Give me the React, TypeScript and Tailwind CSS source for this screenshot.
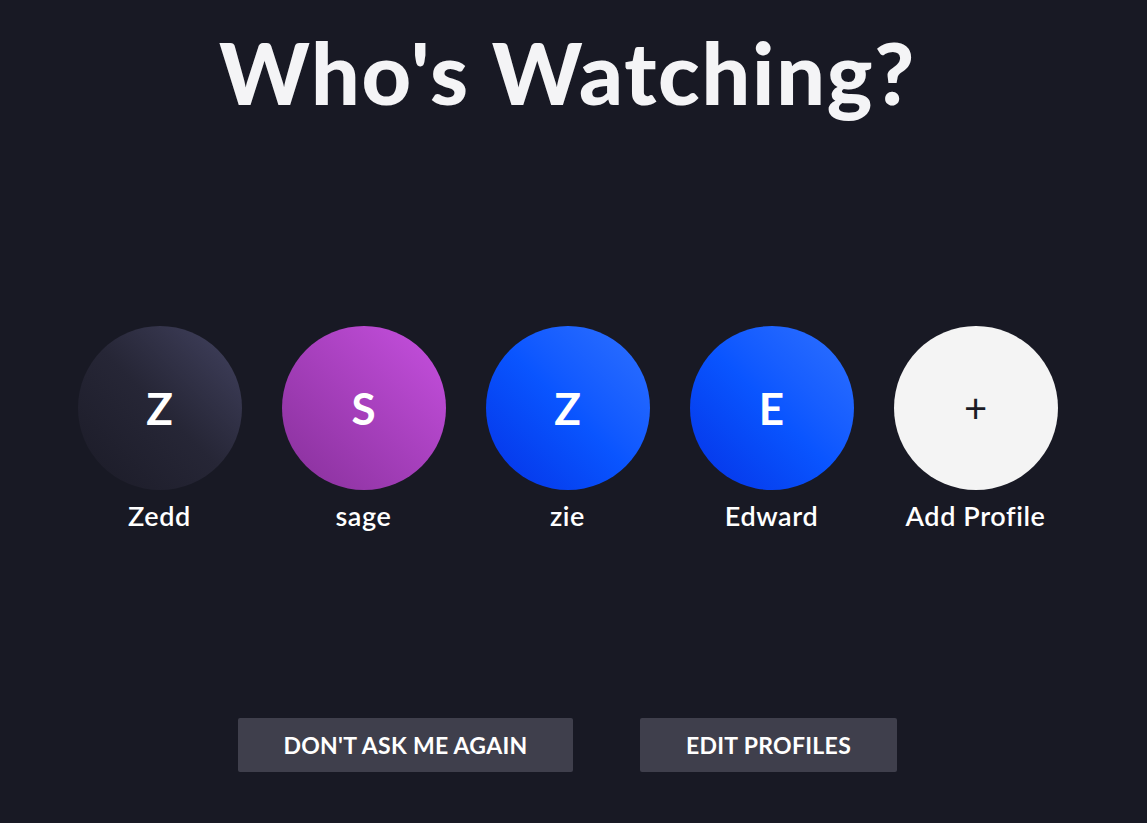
const profiles = [
  { name: "Zedd", initial: "Z", bg: "bg-gradient-to-bl from-[#434361] via-[#262636] to-[#1b1b27]" },
  { name: "sage", initial: "S", bg: "bg-gradient-to-bl from-[#c750e0] to-[#87309a]" },
  { name: "zie", initial: "Z", bg: "bg-gradient-to-bl from-[#2e70ff] via-[#0a55ff] to-[#0830e6]" },
  { name: "Edward", initial: "E", bg: "bg-gradient-to-bl from-[#2e70ff] via-[#0a55ff] to-[#0830e6]" },
];

function Profile({ name, initial, bg }: { name: string; initial: string; bg: string }) {
  return (
    <button type="button" className="flex w-[164px] flex-col items-center">
      <div className={`flex h-[164px] w-[164px] items-center justify-center rounded-full ${bg}`}>
        <span className="text-[44px] font-bold text-white">{initial}</span>
      </div>
      <span className="mt-[10px] whitespace-nowrap text-[27px] font-semibold leading-[32px] tracking-[0.6px] text-white">
        {name}
      </span>
    </button>
  );
}

export default function App() {
  return (
    <div
      className="h-[823px] w-full overflow-hidden bg-[#181924]"
      style={{ fontFamily: "Lato, 'Open Sans', sans-serif" }}
    >
      <div className="flex w-[1135px] flex-col items-center">
        <h1 className="mt-[26px] text-[86px] font-black leading-[92px] tracking-[1.8px] text-[#f4f4f6]">
          Who's Watching?
        </h1>

        <div className="mt-[208px] flex gap-[40px]">
          {profiles.map((p) => (
            <Profile key={p.name} {...p} />
          ))}
          <button type="button" className="flex w-[164px] flex-col items-center">
            <div className="flex h-[164px] w-[164px] items-center justify-center rounded-full bg-[#f4f4f4]">
              <span className="text-[40px] font-normal leading-none text-[#1b1b25]">+</span>
            </div>
            <span className="mt-[10px] whitespace-nowrap text-[27px] font-semibold leading-[32px] tracking-[0.6px] text-white">
              Add Profile
            </span>
          </button>
        </div>

        <div className="mt-[186px] flex gap-[67px]">
          <button
            type="button"
            className="h-[54px] w-[335px] rounded-[2px] bg-[#3f3f4c] text-[23px] font-bold tracking-[0.3px] text-white"
          >
            DON'T ASK ME AGAIN
          </button>
          <button
            type="button"
            className="h-[54px] w-[257px] rounded-[2px] bg-[#3f3f4c] text-[23px] font-bold tracking-[0.3px] text-white"
          >
            EDIT PROFILES
          </button>
        </div>
      </div>
    </div>
  );
}
